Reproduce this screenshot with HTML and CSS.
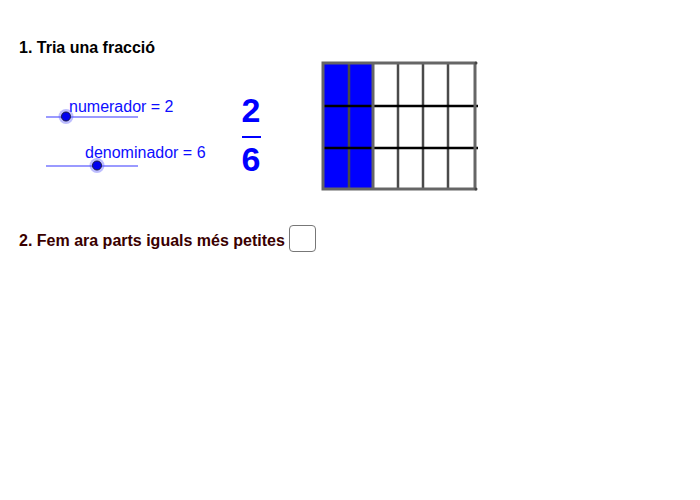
FILE: index.html
```html
<!DOCTYPE html>
<html lang="ca">
<head>
<meta charset="utf-8">
<title>Tria una fracció</title>
<link rel="stylesheet" href="styles.css">
</head>
<body>
<div class="app">
  <h1 class="title">1. Tria una fracció</h1>
  <div class="row">
    <div class="sliders">
      <div class="label label-num">numerador = 2</div>
      <div class="track"><span class="knob knob-num"></span></div>
      <div class="label label-den">denominador = 6</div>
      <div class="track track-den"><span class="knob knob-den"></span></div>
    </div>
    <div class="fraction">
      <div class="digit">2</div>
      <div class="bar"></div>
      <div class="digit digit-den">6</div>
    </div>
    <svg class="grid" width="160" height="132" viewBox="0 0 160 132">
      <rect x="3" y="3" width="50" height="126" fill="#0000ff"/>
      <g stroke="#4a4a4a" stroke-width="2.5">
        <line x1="29" y1="3" x2="29" y2="129"/>
        <line x1="78" y1="3" x2="78" y2="129"/>
        <line x1="103" y1="3" x2="103" y2="129"/>
        <line x1="128" y1="3" x2="128" y2="129"/>
      </g>
      <g stroke="#000" stroke-width="2.5">
        <line x1="2" y1="46" x2="158" y2="46"/>
        <line x1="2" y1="88" x2="158" y2="88"/>
      </g>
      <g stroke="#666" stroke-width="3" fill="none">
        <line x1="53" y1="3" x2="53" y2="129"/>
        <rect x="3" y="3" width="152" height="126"/>
      </g>
      <g fill="#444">
        <circle cx="156" cy="3" r="1.5"/>
        <circle cx="156" cy="129" r="1.5"/>
      </g>
    </svg>
  </div>
  <div class="step2">
    <h2 class="subtitle">2. Fem ara parts iguals més petites</h2>
    <span class="checkbox"></span>
  </div>
</div>
</body>
</html>
```
FILE: styles.css
```css
html, body {
  margin: 0;
  padding: 0;
  background: #fff;
}
body {
  font-family: "Liberation Sans", Arial, sans-serif;
  width: 700px;
  height: 500px;
  overflow: hidden;
}
.app {
  padding-top: 39px;
}
.title {
  margin: 0 0 0 19px;
  font-size: 16px;
  line-height: 18px;
  font-weight: bold;
  color: #000;
}
.row {
  display: flex;
  align-items: flex-start;
  margin-top: 3px;
}
.sliders {
  margin-left: 46px;
  width: 175px;
  display: flex;
  flex-direction: column;
}
.label {
  font-size: 16px;
  line-height: 18px;
  color: #0d0dff;
  white-space: nowrap;
}
.label-num {
  margin-top: 38px;
  margin-left: 23px;
}
.label-den {
  margin-top: 20px;
  margin-left: 39px;
}
.track {
  position: relative;
  width: 92px;
  height: 14px;
  margin-top: -6px;
}
.track::before {
  content: "";
  position: absolute;
  left: 0;
  right: 0;
  top: 6px;
  height: 2px;
  background: #9a9aff;
}
.track-den {
  margin-top: -3px;
}
.knob {
  position: absolute;
  top: 0;
  width: 8px;
  height: 8px;
  border-radius: 50%;
  background: #0000ee;
  border: 1.5px solid #1a1a40;
  box-shadow: 0 0 0 2.5px rgba(90, 90, 255, 0.4);
  transform: translate(-50%, 1.5px);
  box-sizing: content-box;
  margin-left: -1.5px;
}
.knob-num { left: 21px; }
.knob-den { left: 52px; }
.fraction {
  margin-left: 20px;
  margin-top: 35px;
  width: 20px;
  display: flex;
  flex-direction: column;
  align-items: center;
  color: #0000ff;
}
.digit {
  font-size: 34px;
  line-height: 30px;
  font-weight: bold;
}
.bar {
  margin-top: 11px;
  width: 19px;
  height: 2px;
  background: #0000ff;
}
.digit-den {
  margin-top: 6px;
}
.grid {
  display: block;
  margin-left: 59px;
}
.step2 {
  display: flex;
  align-items: flex-start;
  margin-top: 33px;
  margin-left: 19px;
}
.subtitle {
  margin: 7px 4px 0 0;
  font-size: 16px;
  line-height: 18px;
  font-weight: bold;
  color: #3a0000;
  white-space: nowrap;
}
.checkbox {
  display: block;
  width: 25px;
  height: 25px;
  border: 1px solid #777;
  border-radius: 4px;
  background: #fff;
}
```
